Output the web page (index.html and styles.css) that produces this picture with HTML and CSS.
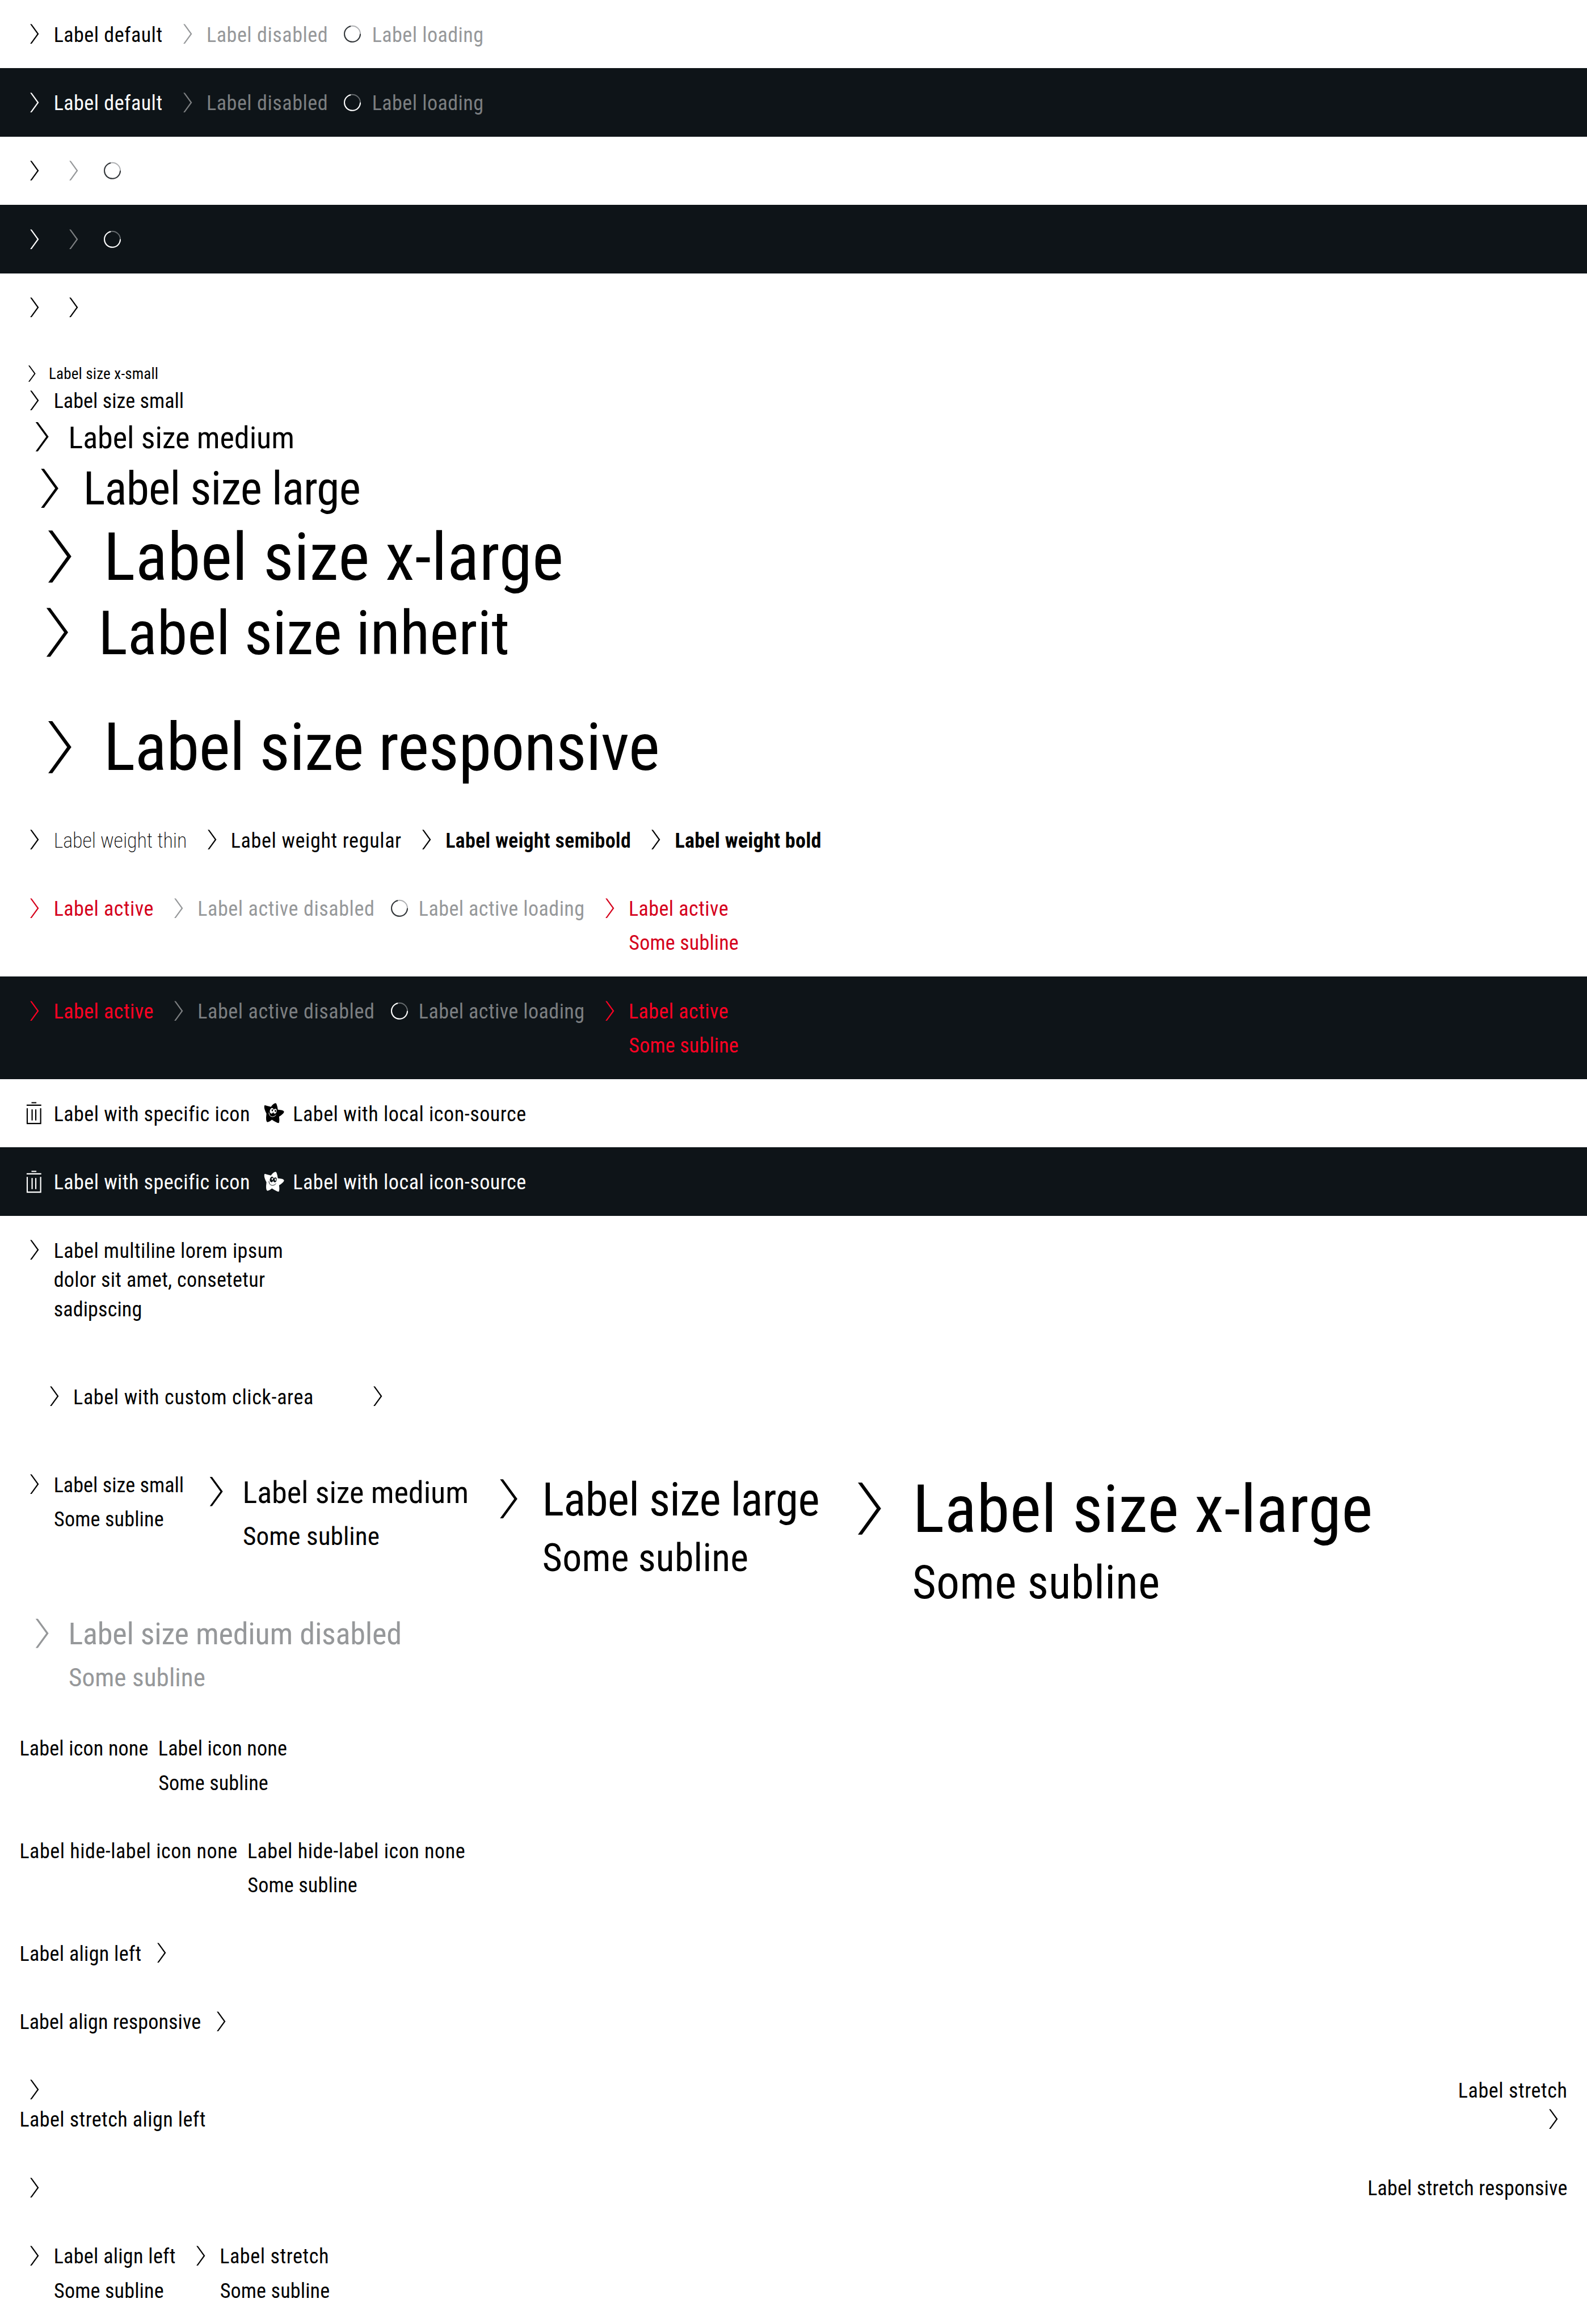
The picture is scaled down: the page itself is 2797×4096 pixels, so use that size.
FILE: index.html
```html
<!DOCTYPE html>
<html lang="en">
<head>
<meta charset="utf-8">
<title>Link Pure</title>
<link rel="stylesheet" href="styles.css">
</head>
<body>
<svg class="sprite" width="0" height="0">
  <symbol id="arrow" viewBox="0 0 24 24"><path fill="currentColor" d="M8.9 4h1.25L16 12l-5.85 8H8.9l5.8-8z"/></symbol>
  <symbol id="spinner" viewBox="0 0 24 24" fill="none">
    <circle class="spin-track" cx="12.1" cy="12" r="6.5"/>
    <path class="spin-arc" d="M18.6 12A6.5 6.5 0 1 1 10.75 5.64"/>
  </symbol>
  <symbol id="trash" viewBox="0 0 24 24"><path fill="currentColor" fill-rule="evenodd" d="M10 3h4v1h-4zM6 5h12v1H6zM6 8h1v12h10V8h1v13H6zM10 9h1v9h-1zM13 9h1v9h-1z"/></symbol>
  <symbol id="star" viewBox="0 0 216 216">
    <path fill="currentColor" d="M45 50Q54 52 90 62Q108 36 125 35Q134 36 141 83Q180 85 187 97Q186 112 150 134Q155 170 148 181Q138 184 97 157Q76 176 62 174Q50 166 57 112Q38 76 41 58Q41 51 45 50Z"/>
    <g class="star-face"><ellipse cx="96" cy="91" rx="14" ry="21" transform="rotate(14 96 91)"/><ellipse cx="120" cy="94" rx="12" ry="18" transform="rotate(14 120 94)"/></g>
    <g fill="currentColor"><ellipse cx="100" cy="87" rx="5" ry="8"/><ellipse cx="123" cy="92" rx="5" ry="8"/></g>
    <path class="star-smile" d="M75 104Q76 134 103 135Q119 133 128 121"/>
  </symbol>
</svg>

<section class="row">
  <a class="link"><svg class="icon"><use href="#arrow"/></svg><span class="label" style="--w:89.2">Label default</span></a>
  <a class="link disabled"><svg class="icon"><use href="#arrow"/></svg><span class="label" style="--w:99.6">Label disabled</span></a>
  <a class="link disabled"><svg class="icon"><use href="#spinner"/></svg><span class="label" style="--w:91.5">Label loading</span></a>
</section>
<section class="row dark">
  <a class="link"><svg class="icon"><use href="#arrow"/></svg><span class="label" style="--w:89.2">Label default</span></a>
  <a class="link disabled"><svg class="icon"><use href="#arrow"/></svg><span class="label" style="--w:99.6">Label disabled</span></a>
  <a class="link disabled"><svg class="icon"><use href="#spinner"/></svg><span class="label" style="--w:91.5">Label loading</span></a>
</section>
<section class="row">
  <a class="link"><svg class="icon"><use href="#arrow"/></svg></a>
  <a class="link disabled"><svg class="icon"><use href="#arrow"/></svg></a>
  <a class="link disabled"><svg class="icon"><use href="#spinner"/></svg></a>
</section>
<section class="row dark">
  <a class="link"><svg class="icon"><use href="#arrow"/></svg></a>
  <a class="link disabled"><svg class="icon"><use href="#arrow"/></svg></a>
  <a class="link disabled"><svg class="icon"><use href="#spinner"/></svg></a>
</section>
<section class="row">
  <a class="link"><svg class="icon"><use href="#arrow"/></svg></a>
  <a class="link"><svg class="icon"><use href="#arrow"/></svg></a>
</section>

<section class="row column">
  <a class="link x-small"><svg class="icon"><use href="#arrow"/></svg><span class="label" style="--w:89.8">Label size x-small</span></a>
  <a class="link"><svg class="icon"><use href="#arrow"/></svg><span class="label" style="--w:106.7">Label size small</span></a>
  <a class="link medium"><svg class="icon"><use href="#arrow"/></svg><span class="label" style="--w:185.2">Label size medium</span></a>
  <a class="link large"><svg class="icon"><use href="#arrow"/></svg><span class="label" style="--w:227">Label size large</span></a>
  <a class="link x-large"><svg class="icon"><use href="#arrow"/></svg><span class="label" style="--w:377">Label size x-large</span></a>
  <a class="link inherit"><svg class="icon"><use href="#arrow"/></svg><span class="label" style="--w:337">Label size inherit</span></a>
</section>
<section class="row">
  <a class="link x-large"><svg class="icon"><use href="#arrow"/></svg><span class="label" style="--w:455.4">Label size responsive</span></a>
</section>

<section class="row">
  <a class="link thin"><svg class="icon"><use href="#arrow"/></svg><span class="label" style="--w:109.1">Label weight thin</span></a>
  <a class="link"><svg class="icon"><use href="#arrow"/></svg><span class="label" style="--w:139.9">Label weight regular</span></a>
  <a class="link semibold"><svg class="icon"><use href="#arrow"/></svg><span class="label" style="--w:151.9">Label weight semibold</span></a>
  <a class="link bold"><svg class="icon"><use href="#arrow"/></svg><span class="label" style="--w:120">Label weight bold</span></a>
</section>

<section class="row">
  <a class="link active"><svg class="icon"><use href="#arrow"/></svg><span class="label" style="--w:81.9">Label active</span></a>
  <a class="link disabled"><svg class="icon"><use href="#arrow"/></svg><span class="label" style="--w:145.1">Label active disabled</span></a>
  <a class="link disabled"><svg class="icon"><use href="#spinner"/></svg><span class="label" style="--w:136">Label active loading</span></a>
  <div class="block active">
    <a class="link"><svg class="icon"><use href="#arrow"/></svg><span class="label" style="--w:81.9">Label active</span></a>
    <div class="subline"><span class="label" style="--w:90">Some subline</span></div>
  </div>
</section>
<section class="row dark">
  <a class="link active"><svg class="icon"><use href="#arrow"/></svg><span class="label" style="--w:81.9">Label active</span></a>
  <a class="link disabled"><svg class="icon"><use href="#arrow"/></svg><span class="label" style="--w:145.1">Label active disabled</span></a>
  <a class="link disabled"><svg class="icon"><use href="#spinner"/></svg><span class="label" style="--w:136">Label active loading</span></a>
  <div class="block active">
    <a class="link"><svg class="icon"><use href="#arrow"/></svg><span class="label" style="--w:81.9">Label active</span></a>
    <div class="subline"><span class="label" style="--w:90">Some subline</span></div>
  </div>
</section>

<section class="row">
  <a class="link"><svg class="icon"><use href="#trash"/></svg><span class="label" style="--w:160">Label with specific icon</span></a>
  <a class="link"><svg class="icon"><use href="#star"/></svg><span class="label" style="--w:191.2">Label with local icon-source</span></a>
</section>
<section class="row dark">
  <a class="link"><svg class="icon"><use href="#trash"/></svg><span class="label" style="--w:160">Label with specific icon</span></a>
  <a class="link"><svg class="icon"><use href="#star"/></svg><span class="label" style="--w:191.2">Label with local icon-source</span></a>
</section>

<section class="row">
  <a class="link"><svg class="icon"><use href="#arrow"/></svg><span class="lines"><span class="label" style="--w:188">Label multiline lorem ipsum</span><span class="label" style="--w:173.2">dolor sit amet, consetetur</span><span class="label" style="--w:72.4">sadipscing</span></span></a>
</section>
<section class="row">
  <a class="link padded"><svg class="icon"><use href="#arrow"/></svg><span class="label" style="--w:197">Label with custom click-area</span></a>
  <a class="link padded"><svg class="icon"><use href="#arrow"/></svg></a>
</section>

<section class="row flush">
  <div class="block">
    <a class="link"><svg class="icon"><use href="#arrow"/></svg><span class="label" style="--w:106.7">Label size small</span></a>
    <div class="subline"><span class="label" style="--w:90">Some subline</span></div>
  </div>
  <div class="block medium">
    <a class="link"><svg class="icon"><use href="#arrow"/></svg><span class="label" style="--w:185.2">Label size medium</span></a>
    <div class="subline"><span class="label" style="--w:112">Some subline</span></div>
  </div>
  <div class="block large">
    <a class="link"><svg class="icon"><use href="#arrow"/></svg><span class="label" style="--w:227">Label size large</span></a>
    <div class="subline"><span class="label" style="--w:169">Some subline</span></div>
  </div>
  <div class="block x-large">
    <a class="link"><svg class="icon"><use href="#arrow"/></svg><span class="label" style="--w:377">Label size x-large</span></a>
    <div class="subline"><span class="label" style="--w:203">Some subline</span></div>
  </div>
</section>
<section class="row continued">
  <div class="block medium disabled">
    <a class="link"><svg class="icon"><use href="#arrow"/></svg><span class="label" style="--w:273">Label size medium disabled</span></a>
    <div class="subline"><span class="label" style="--w:112">Some subline</span></div>
  </div>
</section>

<section class="row">
  <a class="link"><span class="label" style="--w:105.6">Label icon none</span></a>
  <div class="block no-icon">
    <a class="link"><span class="label" style="--w:105.6">Label icon none</span></a>
    <div class="subline"><span class="label" style="--w:90">Some subline</span></div>
  </div>
</section>
<section class="row">
  <a class="link"><span class="label" style="--w:178.6">Label hide-label icon none</span></a>
  <div class="block no-icon">
    <a class="link"><span class="label" style="--w:178.6">Label hide-label icon none</span></a>
    <div class="subline"><span class="label" style="--w:90">Some subline</span></div>
  </div>
</section>

<section class="row">
  <a class="link"><span class="label" style="--w:100">Label align left</span><svg class="icon"><use href="#arrow"/></svg></a>
</section>
<section class="row">
  <a class="link"><span class="label" style="--w:148.7">Label align responsive</span><svg class="icon"><use href="#arrow"/></svg></a>
</section>
<section class="row column">
  <a class="link stretch"><svg class="icon"><use href="#arrow"/></svg><span class="label" style="--w:89.6">Label stretch</span></a>
  <a class="link stretch"><span class="label" style="--w:152.6">Label stretch align left</span><svg class="icon"><use href="#arrow"/></svg></a>
</section>
<section class="row column">
  <a class="link stretch"><svg class="icon"><use href="#arrow"/></svg><span class="label" style="--w:163.8">Label stretch responsive</span></a>
</section>
<section class="row">
  <div class="block">
    <a class="link"><svg class="icon"><use href="#arrow"/></svg><span class="label" style="--w:100">Label align left</span></a>
    <div class="subline"><span class="label" style="--w:90">Some subline</span></div>
  </div>
  <div class="block">
    <a class="link"><svg class="icon"><use href="#arrow"/></svg><span class="label" style="--w:89.6">Label stretch</span></a>
    <div class="subline"><span class="label" style="--w:90">Some subline</span></div>
  </div>
</section>
<script src="main.js"></script>
</body>
</html>
```
FILE: styles.css
```css
html {
  font-size: 34.424px;
  overflow: hidden;
}

body {
  margin: 0;
  color: #000;
  background: #fff;
  font-family: "Roboto Condensed", Roboto, "Liberation Sans", sans-serif;
}

.sprite {
  display: block;
  width: 0;
  height: 0;
}

.row {
  --bg: #fff;
  --muted: #96989a;
  --brand: #d5001c;
  --arc: #323639;
  --track: #afb0b3;
  display: flex;
  align-items: flex-start;
  gap: 0.5rem;
  padding: 1rem;
}

.dark {
  --bg: #0e1418;
  --muted: #7c7f81;
  --brand: #ff0223;
  --arc: #fff;
  --track: #656a6d;
  color: #fff;
  background: var(--bg);
}

.column {
  flex-direction: column;
  align-items: stretch;
  gap: 0;
}

.flush { padding-bottom: 0; }
.continued { padding-top: 0; }

.link,
.block {
  --size: 1rem;
  --box: 1.5rem;
  --sub: 1rem;
  --sub-line: 1.5rem;
  --shift: 0em;
}

.link {
  display: flex;
  align-items: flex-start;
  gap: 0.25rem;
}

.block .link {
  --size: inherit;
  --box: inherit;
  --sub: inherit;
  --sub-line: inherit;
  --shift: inherit;
}

.link.x-small { --size: 0.75rem; --box: 1.25rem; }
.medium { --size: 1.5rem; --box: 2.25rem; --sub: 1.25rem; --sub-line: 1.75rem; }
.large { --size: 2.25rem; --box: 3rem; --sub: 1.875rem; --sub-line: 2.45rem; --shift: 0.005em; }
.x-large { --size: 3.25rem; --box: 4rem; --sub: 2.25rem; --sub-line: 3rem; --shift: 0.015em; }
.link.inherit { --size: 3rem; --box: 3.75rem; --shift: 0.01em; }

.icon {
  display: block;
  flex: none;
  width: var(--box);
  height: var(--box);
}

/* The small top inset centres the letters on the icon; the margin gives the height back. */
.label {
  display: block;
  width: calc(var(--w) * 0.0625rem);
  margin-bottom: -0.04rem;
  padding-top: 0.04rem;
  font-size: calc(var(--size) * 1.05);
  line-height: var(--box);
  text-indent: var(--shift);
  white-space: nowrap;
}

.subline {
  margin: 0.25rem 0 0 calc(var(--box) + 0.25rem);
}

.subline .label {
  --shift: 0.012em;
  font-size: calc(var(--sub) * 1.05);
  line-height: var(--sub-line);
}

.no-icon .subline { margin-left: 0; }

.disabled { color: var(--muted); }
.active { color: var(--brand); }
.thin .label { font-weight: 200; }
.semibold .label { font-weight: 600; }
.bold .label { font-weight: 700; }
.padded { padding: 1rem; }
.stretch { justify-content: space-between; }

.spin-track { stroke: var(--track); stroke-width: 0.9; }
.spin-arc { stroke: var(--arc); stroke-width: 0.95; }

.star-face { fill: var(--bg); }
.star-smile { fill: none; stroke: var(--bg); stroke-width: 4; }
```
FILE: main.js
```js
// Spaces each label's letters so that the text fills its own width.
document.querySelectorAll('.label').forEach(function (label) {
  var range = document.createRange();
  range.selectNodeContents(label);
  var natural = range.getBoundingClientRect().width;
  var target = parseFloat(getComputedStyle(label).width);
  label.style.letterSpacing = (target - natural) / label.textContent.length + 'px';
});
```
